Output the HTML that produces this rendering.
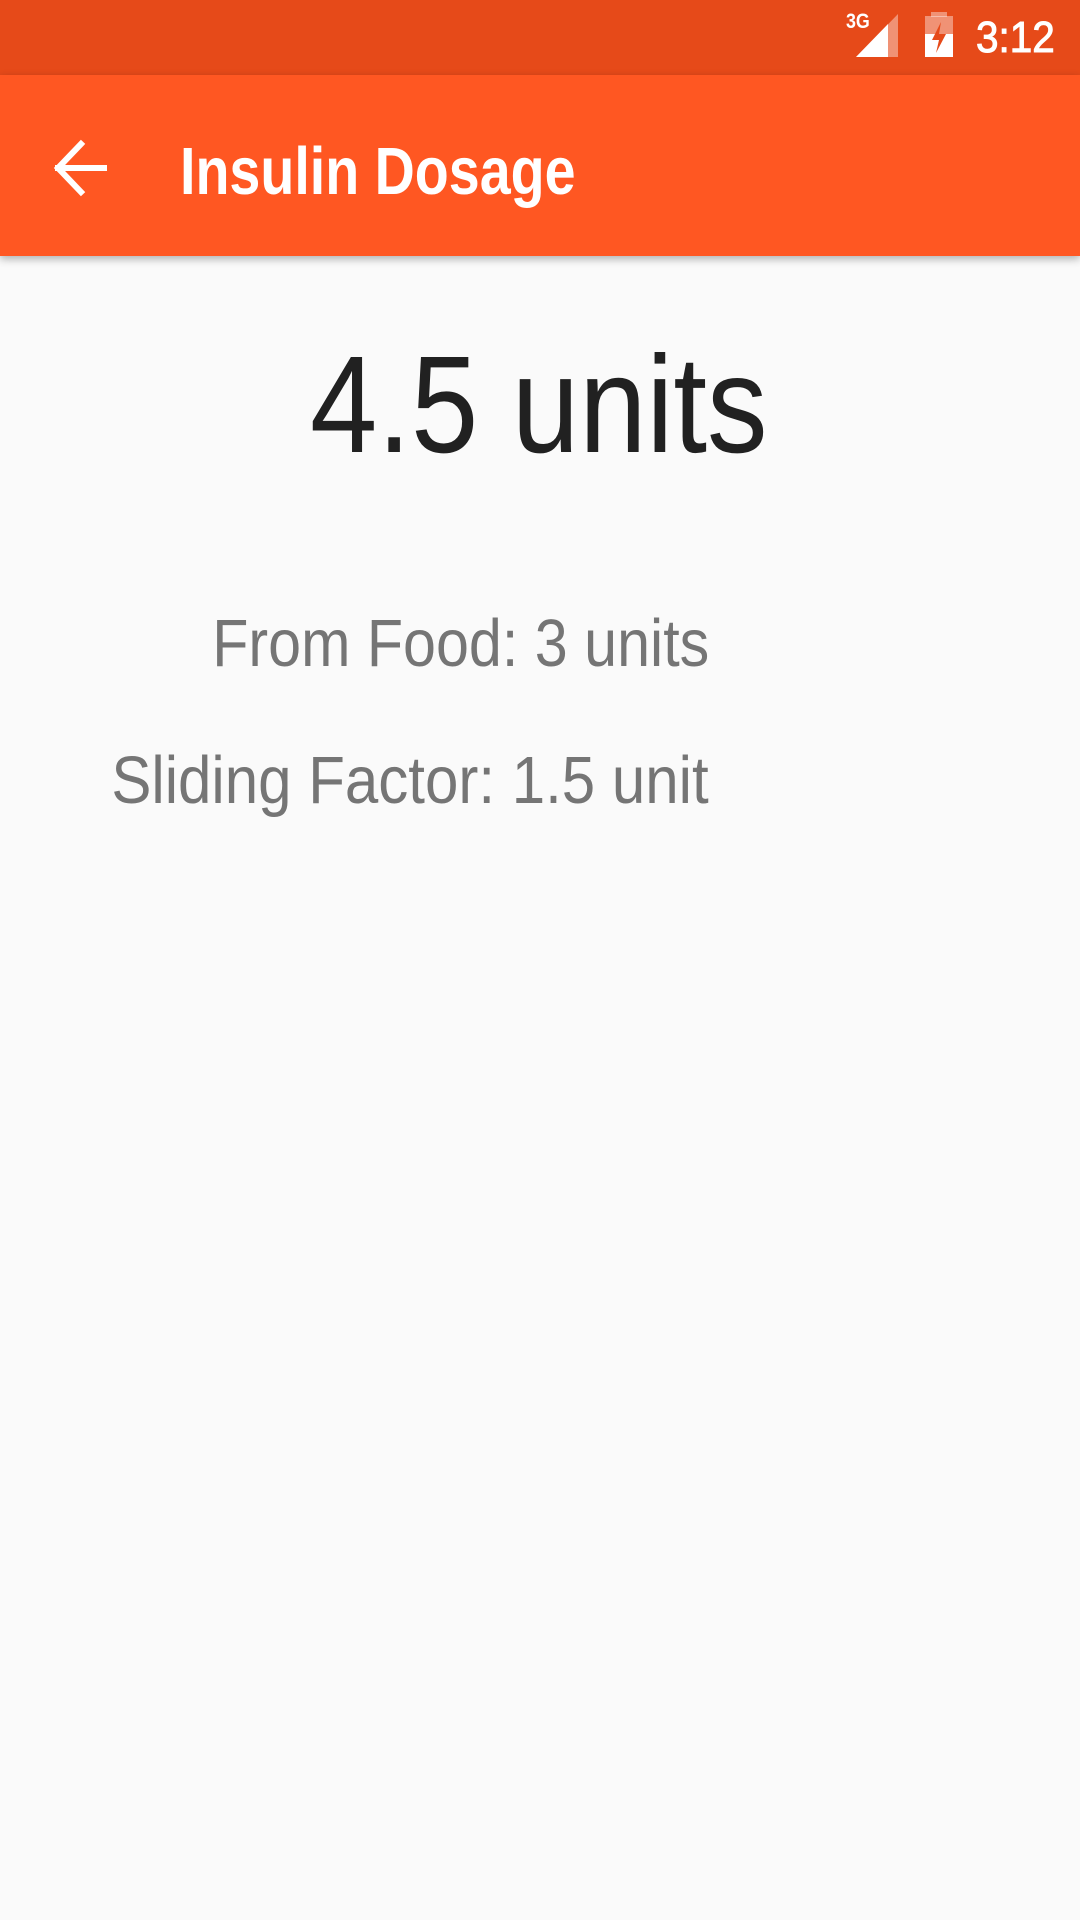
<!DOCTYPE html>
<html><head><meta charset="utf-8"><style>
*{margin:0;padding:0}
body{width:1080px;height:1920px;background:#FAFAFA;position:relative;overflow:hidden;font-family:"Liberation Sans",sans-serif}
.sb{position:absolute;left:0;top:0;width:1080px;height:75px;background:#E64A19}
.tb{position:absolute;left:0;top:75px;width:1080px;height:181px;background:#FF5722;box-shadow:0 3px 8px rgba(0,0,0,0.3)}
.t{position:absolute;white-space:nowrap;line-height:1}
</style></head><body>
<div class="sb"></div>
<div class="tb"></div>
<div class="t" style="left:846px;top:11px;font-size:21px;font-weight:bold;color:#fff;transform:scaleX(0.85);transform-origin:left">3G</div>
<svg style="position:absolute;left:850px;top:10px" width="120" height="52">
<polygon points="6,47 48,4 48,47" fill="rgba(255,255,255,0.4)"/>
<polygon points="6,47 38,14 38,47" fill="#fff"/>
<rect x="75" y="6" width="28" height="41" fill="rgba(255,255,255,0.4)"/>
<rect x="81" y="2" width="16" height="5" fill="rgba(255,255,255,0.4)"/>
<rect x="75" y="24" width="28" height="23" fill="#fff"/>
<polygon points="91,12 82,30 89,30 86,43 96,24 89,24" fill="#E64A19"/>
</svg>
<div class="t" style="left:976px;top:16px;font-size:44px;color:#fff;-webkit-text-stroke:1px #fff;transform:scaleX(0.92);transform-origin:left">3:12</div>
<svg style="position:absolute;left:44px;top:139px" width="64" height="60">
<path d="M14 29 H60 M37 5 L14 29 L37 53" stroke="#fff" stroke-width="6" fill="none" stroke-linecap="square"/>
</svg>
<div class="t" style="left:180px;top:138px;font-size:67px;font-weight:bold;color:#fff;transform:scaleX(0.83);transform-origin:left">Insulin Dosage</div>
<div class="t" style="left:310px;top:336px;font-size:138px;color:#212121;transform:scaleX(0.877);transform-origin:left">4.5 units</div>
<div class="t" style="right:371px;top:610px;font-size:67px;color:#757575;transform:scaleX(0.884);transform-origin:right">From Food: 3 units</div>
<div class="t" style="right:371px;top:747px;font-size:67px;color:#757575;transform:scaleX(0.896);transform-origin:right">Sliding Factor: 1.5 unit</div>
</body></html>
